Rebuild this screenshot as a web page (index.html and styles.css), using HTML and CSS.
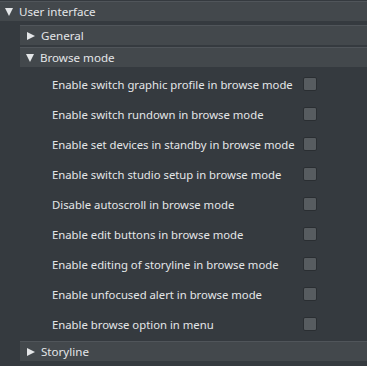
FILE: index.html
```html
<!DOCTYPE html>
<html lang="en">
<head>
  <meta charset="UTF-8">
  <title>Settings</title>
  <link rel="stylesheet" href="styles.css">
</head>
<body>

<div class="group">
  <div class="group-head top"><span class="arrow down"></span>User interface</div>
  <div class="group-body">
    <div class="group-head"><span class="arrow right"></span>General</div>
    <div class="group-head"><span class="arrow down"></span>Browse mode</div>
    <div class="options">
      <label class="option"><span>Enable switch graphic profile in browse mode</span><input type="checkbox"></label>
      <label class="option"><span>Enable switch rundown in browse mode</span><input type="checkbox"></label>
      <label class="option"><span>Enable set devices in standby in browse mode</span><input type="checkbox"></label>
      <label class="option"><span>Enable switch studio setup in browse mode</span><input type="checkbox"></label>
      <label class="option"><span>Disable autoscroll in browse mode</span><input type="checkbox"></label>
      <label class="option"><span>Enable edit buttons in browse mode</span><input type="checkbox"></label>
      <label class="option"><span>Enable editing of storyline in browse mode</span><input type="checkbox"></label>
      <label class="option"><span>Enable unfocused alert in browse mode</span><input type="checkbox"></label>
      <label class="option"><span>Enable browse option in menu</span><input type="checkbox"></label>
    </div>
    <div class="group-head"><span class="arrow right"></span>Storyline</div>
  </div>
</div>

</body>
</html>
```

FILE: styles.css
```css
* {
  box-sizing: border-box;
}

html,
body {
  height: 100%;
}

body {
  margin: 0;
  padding-top: 1px;
  background: #353a3f;
  color: #e4e6e8;
  font-family: "Noto Sans", "Open Sans", sans-serif;
  font-size: 11.3px;
  overflow: hidden;
}

.group-head {
  display: flex;
  align-items: center;
  height: 20px;
  margin-bottom: 2px;
  padding-left: 6px;
  background: #43484c;
  border-top: 1px solid #50555a;
  font-size: 11.6px;
}

.group-head.top {
  margin-bottom: 4px;
  padding-left: 5px;
}

.arrow {
  width: 0;
  height: 0;
  margin-right: 6px;
}

.arrow.down {
  border-left: 4.5px solid transparent;
  border-right: 4.5px solid transparent;
  border-top: 8px solid #e4e6e8;
}

.arrow.right {
  margin-left: 1px;
  border-top: 4.5px solid transparent;
  border-bottom: 4.5px solid transparent;
  border-left: 8px solid #e4e6e8;
}

.group-body {
  padding-left: 20px;
}

.options {
  padding-bottom: 2px;
}

.option {
  display: grid;
  grid-template-columns: 251px 14px;
  align-items: center;
  height: 30px;
  padding-left: 32px;
  white-space: nowrap;
}

.option input {
  appearance: none;
  width: 14px;
  height: 14px;
  margin: 0;
  background: #575c60;
  border: 1px solid #2a2e32;
  border-radius: 2px;
}
```
